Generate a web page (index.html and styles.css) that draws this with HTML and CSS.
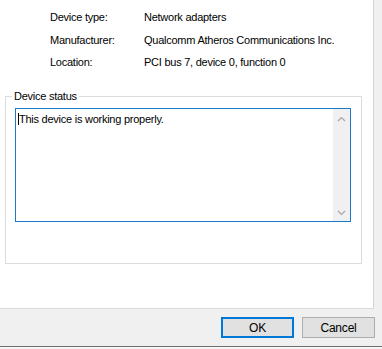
FILE: index.html
```html
<!DOCTYPE html>
<html lang="en">
<head>
    <meta charset="UTF-8">
    <title>Device Properties</title>
    <link rel="stylesheet" href="styles.css">
</head>
<body>
    <div class="panel">
        <div class="info">
            <div class="label">Device type:</div>
            <div class="value">Network adapters</div>
            <div class="label">Manufacturer:</div>
            <div class="value">Qualcomm Atheros Communications Inc.</div>
            <div class="label">Location:</div>
            <div class="value">PCI bus 7, device 0, function 0</div>
        </div>

        <fieldset class="status">
            <legend>Device status</legend>
            <div class="status-box">
                <div class="status-text"><span class="caret"></span>This device is working properly.</div>
                <div class="scrollbar">
                    <svg width="9" height="6" viewBox="0 0 9 6"><path d="M1 5 L4.5 1.5 L8 5" fill="none" stroke="#a6a6a6" stroke-width="1.2"/></svg>
                    <svg width="9" height="6" viewBox="0 0 9 6"><path d="M1 1 L4.5 4.5 L8 1" fill="none" stroke="#a6a6a6" stroke-width="1.2"/></svg>
                </div>
            </div>
        </fieldset>
    </div>

    <div class="buttons">
        <button class="default">OK</button>
        <button>Cancel</button>
    </div>

    <div class="statusbar"></div>
</body>
</html>
```

FILE: styles.css
```css
body {
    margin: 0;
    background-color: #f0f0f0;
    font-family: "Liberation Sans", Arial, sans-serif;
    font-size: 11px;
    letter-spacing: -0.25px;
    color: #000;
    overflow: hidden;
}

.panel {
    width: 373px;
    height: 308px;
    background-color: #fff;
    border-right: 1px solid #d5d5d5;
    border-bottom: 1px solid #d9d9d9;
    box-sizing: content-box;
}

.info {
    display: grid;
    grid-template-columns: 94px auto;
    grid-auto-rows: 22.5px;
    align-items: center;
    padding: 6px 0 0 50px;
}

.status {
    margin: 15px 0 0 5px;
    width: 357px;
    box-sizing: border-box;
    padding: 0 10px 41px 9px;
    border: 1px solid #dcdcdc;
}

.status legend {
    margin-left: -3px;
    padding: 0 2px;
    line-height: 15px;
}

.status-box {
    margin-top: 4px;
    height: 114px;
    box-sizing: border-box;
    border: 1px solid #1979ca;
    display: flex;
}

.status-text {
    flex: 1;
    padding: 3px 0 0 2px;
    line-height: 14px;
}

.caret {
    display: inline-block;
    width: 1px;
    height: 12px;
    background-color: #000;
    vertical-align: -2px;
}

.scrollbar {
    width: 17px;
    background-color: #f0f0f0;
    display: flex;
    flex-direction: column;
    justify-content: space-between;
    align-items: center;
    padding: 7px 0 5px;
}

.buttons {
    display: flex;
    justify-content: flex-end;
    gap: 8px;
    padding: 8px 7px 0 0;
    height: 29px;
}

button {
    width: 73px;
    height: 21px;
    font-family: inherit;
    font-size: 12px;
    letter-spacing: -0.2px;
    color: #000;
    background-color: #e1e1e1;
    border: 1px solid #adadad;
    border-radius: 0;
    padding: 0;
}

button.default {
    border: 2px solid #0078d7;
}

.statusbar {
    border-top: 1px solid #6e6e6e;
    height: 4px;
    background-color: #f7f7f7;
}
```
